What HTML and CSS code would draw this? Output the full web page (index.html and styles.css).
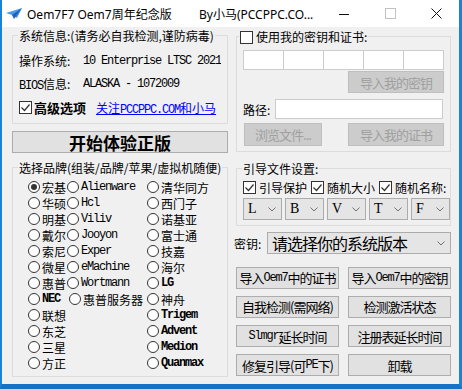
FILE: index.html
```html
<!DOCTYPE html>
<html lang="zh-CN">
<head>
    <meta charset="UTF-8">
    <title>Oem7F7 Oem7周年纪念版</title>
    <link rel="stylesheet" href="styles.css">
</head>
<body>
<div class="window">
    <div class="titlebar">
        <svg class="app-icon" width="16" height="11" viewBox="0 0 16 11">
            <polygon points="0,5 16,0 11,10 6,7" fill="#4a9be8"/>
            <polygon points="6,7 16,0 8,11" fill="#1d62bd"/>
        </svg>
        <span class="title">Oem7F7 Oem7周年纪念版</span>
        <span class="title-by">By小马(PCCPPC.CO...</span>
        <div class="caption">
            <span class="cap-btn">
                <svg width="10" height="10" viewBox="0 0 10 10"><line x1="0" y1="5.5" x2="10" y2="5.5" stroke="#111"/></svg>
            </span>
            <span class="cap-btn">
                <svg width="11" height="11" viewBox="0 0 11 11"><rect x="0.5" y="0.5" width="10" height="10" fill="none" stroke="#c2c2c2"/></svg>
            </span>
            <span class="cap-btn">
                <svg width="11" height="11" viewBox="0 0 11 11"><path d="M0.5 0.5 L10.5 10.5 M10.5 0.5 L0.5 10.5" stroke="#111"/></svg>
            </span>
        </div>
    </div>

    <div class="client">
        <!-- left: system info + brands -->
        <div class="col-left">
            <div class="group group-info">
                <div class="group-title">系统信息:(请务必自我检测,谨防病毒)</div>
                <div class="info-row info-row-first">
                    <span class="info-label">操作系统:</span>
                    <span class="info-value en">10 Enterprise LTSC 2021</span>
                </div>
                <div class="info-row">
                    <span class="info-label"><span class="en">BIOS</span>信息:</span>
                    <span class="info-value en">ALASKA - 1072009</span>
                </div>
                <div class="info-row info-row-last">
                    <span class="check"><svg width="11" height="11" viewBox="0 0 11 11"><polyline points="1.5,5.5 4.5,8.5 9.5,2.5" fill="none" stroke="#333" stroke-width="1.2"/></svg></span>
                    <span class="adv-label">高级选项</span>
                    <span class="link">关注<span class="en">PCCPPC.COM</span>和小马</span>
                </div>
            </div>

            <div class="btn btn-start">开始体验正版</div>

            <div class="group group-brand">
                <div class="group-title">选择品牌(组装/品牌/苹果/虚拟机随便)</div>
                <div class="brand-cols">
                    <div class="brand-col col-a">
                        <div class="radio-item"><span class="radio on"></span>宏基</div>
                        <div class="radio-item"><span class="radio"></span>华硕</div>
                        <div class="radio-item"><span class="radio"></span>明基</div>
                        <div class="radio-item"><span class="radio"></span>戴尔</div>
                        <div class="radio-item"><span class="radio"></span>索尼</div>
                        <div class="radio-item"><span class="radio"></span>微星</div>
                        <div class="radio-item"><span class="radio"></span>惠普</div>
                        <div class="radio-item"><span class="radio"></span><span class="en b">NEC</span></div>
                        <div class="radio-item"><span class="radio"></span>联想</div>
                        <div class="radio-item"><span class="radio"></span>东芝</div>
                        <div class="radio-item"><span class="radio"></span>三星</div>
                        <div class="radio-item"><span class="radio"></span>方正</div>
                    </div>
                    <div class="brand-col col-b">
                        <div class="radio-item"><span class="radio"></span><span class="en">Alienware</span></div>
                        <div class="radio-item"><span class="radio"></span><span class="en">Hcl</span></div>
                        <div class="radio-item"><span class="radio"></span><span class="en">Viliv</span></div>
                        <div class="radio-item"><span class="radio"></span><span class="en">Jooyon</span></div>
                        <div class="radio-item"><span class="radio"></span><span class="en">Exper</span></div>
                        <div class="radio-item"><span class="radio"></span><span class="en">eMachine</span></div>
                        <div class="radio-item"><span class="radio"></span><span class="en">Wortmann</span></div>
                        <div class="radio-item shift"><span class="radio"></span>惠普服务器</div>
                    </div>
                    <div class="brand-col col-c">
                        <div class="radio-item"><span class="radio"></span>清华同方</div>
                        <div class="radio-item"><span class="radio"></span>西门子</div>
                        <div class="radio-item"><span class="radio"></span>诺基亚</div>
                        <div class="radio-item"><span class="radio"></span>富士通</div>
                        <div class="radio-item"><span class="radio"></span>技嘉</div>
                        <div class="radio-item"><span class="radio"></span>海尔</div>
                        <div class="radio-item"><span class="radio"></span><span class="en b">LG</span></div>
                        <div class="radio-item"><span class="radio"></span>神舟</div>
                        <div class="radio-item"><span class="radio"></span><span class="en b">Trigem</span></div>
                        <div class="radio-item"><span class="radio"></span><span class="en b">Advent</span></div>
                        <div class="radio-item"><span class="radio"></span><span class="en b">Medion</span></div>
                        <div class="radio-item"><span class="radio"></span><span class="en b">Quanmax</span></div>
                    </div>
                </div>
            </div>
        </div>

        <!-- right: key / cert, boot settings, actions -->
        <div class="col-right">
            <div class="group group-key">
                <div class="group-title title-check">
                    <span class="check"></span>使用我的密钥和证书:
                </div>
                <div class="key-boxes">
                    <span></span><span></span><span></span><span></span><span></span>
                </div>
                <div class="btn btn-off btn-import-key">导入我的密钥</div>
                <div class="path-row">
                    <span class="path-label">路径:</span>
                    <span class="text-input"></span>
                </div>
                <div class="btn-row">
                    <div class="btn btn-off btn-browse">浏览文件...</div>
                    <div class="btn btn-off btn-import-cert">导入我的证书</div>
                </div>
            </div>

            <div class="group group-boot">
                <div class="group-title">引导文件设置:</div>
                <div class="boot-checks">
                    <div class="check-item">
                        <span class="check"><svg width="11" height="11" viewBox="0 0 11 11"><polyline points="1.5,5.5 4.5,8.5 9.5,2.5" fill="none" stroke="#333" stroke-width="1.2"/></svg></span>引导保护
                    </div>
                    <div class="check-item">
                        <span class="check"><svg width="11" height="11" viewBox="0 0 11 11"><polyline points="1.5,5.5 4.5,8.5 9.5,2.5" fill="none" stroke="#333" stroke-width="1.2"/></svg></span>随机大小
                    </div>
                    <div class="check-item">
                        <span class="check"><svg width="11" height="11" viewBox="0 0 11 11"><polyline points="1.5,5.5 4.5,8.5 9.5,2.5" fill="none" stroke="#333" stroke-width="1.2"/></svg></span>随机名称:
                    </div>
                </div>
                <div class="boot-combos">
                    <div class="combo combo-sm"><span>L</span><svg class="chev" width="8" height="5" viewBox="0 0 8 5"><polyline points="0.5,0.5 4,4 7.5,0.5" fill="none" stroke="#707070"/></svg></div>
                    <div class="combo combo-sm"><span>B</span><svg class="chev" width="8" height="5" viewBox="0 0 8 5"><polyline points="0.5,0.5 4,4 7.5,0.5" fill="none" stroke="#707070"/></svg></div>
                    <div class="combo combo-sm"><span>V</span><svg class="chev" width="8" height="5" viewBox="0 0 8 5"><polyline points="0.5,0.5 4,4 7.5,0.5" fill="none" stroke="#707070"/></svg></div>
                    <div class="combo combo-sm"><span>T</span><svg class="chev" width="8" height="5" viewBox="0 0 8 5"><polyline points="0.5,0.5 4,4 7.5,0.5" fill="none" stroke="#707070"/></svg></div>
                    <div class="combo combo-sm"><span>F</span><svg class="chev" width="8" height="5" viewBox="0 0 8 5"><polyline points="0.5,0.5 4,4 7.5,0.5" fill="none" stroke="#707070"/></svg></div>
                </div>
            </div>

            <div class="key-row">
                <span class="key-label">密钥:</span>
                <div class="combo combo-key">
                    <span>请选择你的系统版本</span>
                    <svg class="chev" width="8" height="5" viewBox="0 0 8 5"><polyline points="0.5,0.5 4,4 7.5,0.5" fill="none" stroke="#707070"/></svg>
                </div>
            </div>

            <div class="action-grid">
                <div class="btn">导入<span class="en">Oem7</span>中的证书</div>
                <div class="btn">导入<span class="en">Oem7</span>中的密钥</div>
                <div class="btn">自我检测(需网络)</div>
                <div class="btn">检测激活状态</div>
                <div class="btn"><span class="en">Slmgr</span>延长时间</div>
                <div class="btn">注册表延长时间</div>
                <div class="btn">修复引导(可<span class="en">PE</span>下)</div>
                <div class="btn">卸载</div>
            </div>
        </div>
    </div>
</div>
</body>
</html>
```

FILE: styles.css
```css
* {
    box-sizing: border-box;
}
body {
    margin: 0;
    width: 462px;
    height: 389px;
    overflow: hidden;
    font-family: "Noto Sans CJK SC", sans-serif;
    font-size: 12px;
    color: #000;
    background: #f0f0f0;
}
.window {
    height: 389px;
    display: flex;
    flex-direction: column;
    background: #f0f0f0;
    border-left: 2px solid #1883d7;
    border-right: 3px solid #1883d7;
    border-bottom: 5px solid #1672c4;
}

/* title bar */
.titlebar {
    height: 27px;
    flex-shrink: 0;
    display: flex;
    align-items: center;
    background: #fff;
}
.app-icon {
    margin-left: 4px;
}
.title,
.title-by {
    font-family: "Noto Sans", "Noto Sans CJK SC", sans-serif;
    font-size: 12px;
    white-space: nowrap;
}
.title {
    margin-left: 5px;
    width: 172px;
}
.caption {
    margin-left: auto;
    display: flex;
}
.cap-btn {
    width: 46px;
    height: 27px;
    display: flex;
    align-items: center;
    justify-content: center;
}

/* client area */
.client {
    flex: 1;
    display: flex;
    padding-left: 10px;
}
.col-left {
    width: 216px;
    display: flex;
    flex-direction: column;
}
.col-right {
    width: 217px;
    margin-left: 6px;
    display: flex;
    flex-direction: column;
}
.en {
    font-family: "Liberation Mono", monospace;
    font-size: 12px;
    letter-spacing: -1.2px;
}
.en.b {
    font-weight: bold;
}

/* group boxes */
.group {
    border: 1px solid #dcdcdc;
    padding: 0 6px;
    display: flex;
    flex-direction: column;
}
.group-title {
    align-self: flex-start;
    margin: -7px 0 0 -1px;
    padding: 0 1px;
    line-height: 14px;
    background: #f0f0f0;
    white-space: nowrap;
}
.title-check {
    display: flex;
    align-items: center;
    margin-left: -4px;
}
.title-check .check {
    margin-right: 3px;
}

/* checkbox + radio */
.check {
    width: 13px;
    height: 13px;
    flex-shrink: 0;
    border: 1px solid #333;
    background: #fff;
    display: inline-flex;
    align-items: center;
    justify-content: center;
}
.radio {
    width: 12px;
    height: 12px;
    flex-shrink: 0;
    margin-right: 2px;
    border: 1px solid #333;
    border-radius: 50%;
    background: #fff;
    display: inline-flex;
    align-items: center;
    justify-content: center;
}
.radio.on::after {
    content: "";
    width: 6px;
    height: 6px;
    border-radius: 50%;
    background: #333;
}

/* system info */
.group-info {
    margin-top: 8px;
    padding-bottom: 3px;
}
.info-row {
    height: 23px;
    display: flex;
    align-items: center;
    white-space: nowrap;
}
.info-row-first {
    margin-top: 6px;
}
.info-row-last {
    height: 25px;
}
.info-label {
    width: 64px;
    flex-shrink: 0;
}
.info-value {
    width: 139px;
    overflow: hidden;
}
.adv-label {
    margin-left: 2px;
    font-size: 13px;
    font-weight: bold;
}
.link {
    margin-left: 10px;
    color: #0000ff;
    text-decoration: underline;
}

/* buttons */
.btn {
    display: flex;
    align-items: center;
    justify-content: center;
    background: #e1e1e1;
    border: 1px solid #adadad;
    font-size: 13px;
    letter-spacing: -1px;
    white-space: nowrap;
}
.btn .en {
    letter-spacing: -1.2px;
}
.btn-off {
    background: #cccccc;
    border-color: #bfbfbf;
    color: #a0a0a0;
}
.btn-start {
    margin-top: 7px;
    height: 22px;
    font-size: 17px;
    font-weight: bold;
    letter-spacing: 0;
}

/* brands */
.group-brand {
    margin-top: 14px;
    padding-bottom: 5px;
}
.brand-cols {
    display: flex;
    margin: 4px 0 0 9px;
}
.col-a {
    width: 39px;
}
.col-b {
    width: 80px;
}
.radio-item {
    height: 16px;
    display: flex;
    align-items: center;
    white-space: nowrap;
}
.radio-item.shift {
    margin-left: 2px;
}

/* key + cert */
.group-key {
    margin: 9px 0 0 2px;
    padding-bottom: 5px;
}
.key-boxes {
    height: 20px;
    margin-top: 6px;
    display: flex;
    border: 1px solid #cccccc;
    background: #fff;
}
.key-boxes span {
    flex: 1;
    border-left: 1px solid #cccccc;
}
.key-boxes span:first-child {
    border-left: none;
}
.btn-import-key {
    align-self: flex-end;
    width: 96px;
    height: 22px;
    margin-top: 1px;
}
.path-row {
    height: 20px;
    margin-top: 6px;
    display: flex;
    align-items: center;
}
.path-label {
    width: 32px;
}
.text-input {
    width: 168px;
    height: 20px;
    border: 1px solid #cccccc;
    background: #fff;
}
.btn-row {
    margin-top: 4px;
    display: flex;
    justify-content: space-between;
}
.btn-browse {
    width: 78px;
    height: 23px;
    margin-left: 1px;
}
.btn-import-cert {
    width: 96px;
    height: 23px;
}

/* boot settings */
.group-boot {
    margin: 16px 0 0 2px;
    padding-bottom: 5px;
}
.boot-checks {
    height: 14px;
    margin-top: 4px;
    display: flex;
    align-items: center;
    gap: 4px;
}
.check-item {
    flex-shrink: 0;
    display: flex;
    align-items: center;
    white-space: nowrap;
}
.check-item .check {
    margin-right: 3px;
}
.boot-combos {
    margin-top: 4px;
    display: flex;
    gap: 3px;
}
.combo {
    display: flex;
    align-items: center;
    background: #e5e5e5;
    border: 1px solid #acacac;
}
.combo .chev {
    margin-left: auto;
}
.combo-sm {
    width: 39px;
    height: 22px;
    flex-shrink: 0;
    padding: 0 5px 0 4px;
    font-family: "Liberation Serif", serif;
    font-size: 14px;
}
.key-row {
    height: 22px;
    margin-top: 6px;
    display: flex;
    align-items: center;
}
.key-label {
    width: 33px;
}
.combo-key {
    width: 184px;
    height: 22px;
    padding: 0 5px 0 4px;
    font-size: 16px;
    letter-spacing: -1px;
}

/* action buttons */
.action-grid {
    margin: 12.5px 0 0 2px;
    display: grid;
    grid-template-columns: 103px 103px;
    grid-auto-rows: 22px;
    column-gap: 9px;
    row-gap: 7.3px;
}
```
